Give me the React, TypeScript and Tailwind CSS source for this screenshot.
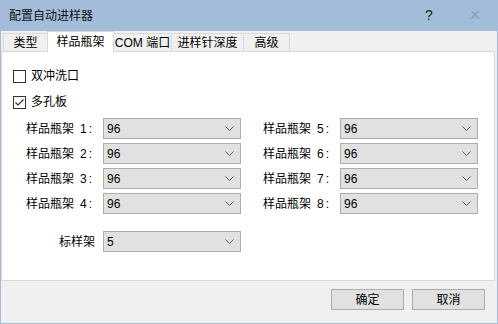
import React from 'react';

const FONT = "font-['Liberation_Sans','Noto_Sans_CJK_SC',sans-serif]";

function Chevron() {
    return (
        <svg width="9" height="5" viewBox="0 0 9 5" className="shrink-0">
            <path d="M0.5 0.5 L4.5 4.5 L8.5 0.5" fill="none" stroke="#5a5a5a" strokeWidth="1" />
        </svg>
    );
}

function Combo({ value }: { value: string }) {
    return (
        <div className="w-[138px] h-[21px] bg-[#e1e1e1] border border-[#adadad] flex items-center justify-between pl-[3px] pr-[6px] text-[12px] text-black">
            <span>{value}</span>
            <Chevron />
        </div>
    );
}

function RackRow({ n }: { n: number }) {
    return (
        <div className="flex items-center h-[21px]">
            <span className="w-[90px] flex justify-end pr-[9px] text-[12px] text-black whitespace-nowrap">
                <span>样品瓶架</span>
                <span className="ml-[6px] tracking-[2px]">{n}:</span>
            </span>
            <Combo value="96" />
        </div>
    );
}

function Checkbox({ checked, label }: { checked: boolean, label: string }) {
    return (
        <div className="flex items-center gap-[5px] h-[16px]">
            <div className="w-[13px] h-[13px] border border-[#333] bg-white flex items-center justify-center">
                {checked && (
                    <svg width="11" height="11" viewBox="0 0 11 11">
                        <path d="M1.5 5.5 L4 8 L9.5 2.5" fill="none" stroke="#333" strokeWidth="1.2" />
                    </svg>
                )}
            </div>
            <span className="text-[12px] text-black">{label}</span>
        </div>
    );
}

export default function App() {
    const tabs = [
        { label: '类型', w: 'w-[45px]' },
        { label: '样品瓶架', w: 'w-[67px]', active: true },
        { label: 'COM 端口', w: 'w-[59px]' },
        { label: '进样针深度', w: 'w-[73px]' },
        { label: '高级', w: 'w-[47px]' },
    ];

    return (
        <div className={`w-[498px] h-[324px] bg-[#a2bcd9] flex flex-col ${FONT}`}>
            <div className="h-[31px] flex items-center justify-between pl-[9px] shrink-0">
                <span className="text-[12px] text-[#111]">配置自动进样器</span>
                <div className="flex items-center">
                    <span className="text-[14px] text-[#222] w-[46px] text-center">?</span>
                    <span className="text-[18px] text-[#8a9bb0] w-[46px] text-center font-light">×</span>
                </div>
            </div>
            <div className="flex-1 mx-[1px] mb-[1px] bg-[#f0f0f0] flex flex-col">
                <div className="flex items-end h-[21px] pl-[2px]">
                    {tabs.map(t => (
                        <div
                            key={t.label}
                            className={
                                t.active
                                    ? `relative z-10 ${t.w} -ml-px h-[21px] bg-white border border-b-0 border-[#d9d9d9] flex items-center justify-center text-[12px] text-black whitespace-nowrap`
                                    : `${t.w} -ml-px first:ml-0 h-[19px] bg-[#f0f0f0] border border-[#d9d9d9] flex items-center justify-center text-[12px] text-black whitespace-nowrap`
                            }
                        >
                            {t.label}
                        </div>
                    ))}
                </div>
                <div className="-mt-px w-[494px] h-[230px] bg-white border border-[#d9d9d9] pl-[11px] pt-[16px]">
                    <div className="flex flex-col gap-[10px]">
                        <Checkbox checked={false} label="双冲洗口" />
                        <Checkbox checked={true} label="多孔板" />
                    </div>
                    <div className="flex mt-[8px]">
                        <div className="flex flex-col gap-[4px]">
                            {[1, 2, 3, 4].map(n => <RackRow key={n} n={n} />)}
                        </div>
                        <div className="flex flex-col gap-[4px] ml-[9px]">
                            {[5, 6, 7, 8].map(n => <RackRow key={n} n={n} />)}
                        </div>
                    </div>
                    <div className="flex items-center h-[21px] mt-[17px]">
                        <span className="w-[90px] text-right pr-[8px] text-[12px] text-black">标样架</span>
                        <Combo value="5" />
                    </div>
                </div>
                <div className="flex justify-end gap-[8px] pr-[12px] mt-[8px]">
                    <button className="w-[73px] h-[21px] bg-[#e1e1e1] border border-[#adadad] text-[12px] text-black">确定</button>
                    <button className="w-[73px] h-[21px] bg-[#e1e1e1] border border-[#adadad] text-[12px] text-black">取消</button>
                </div>
            </div>
        </div>
    );
}
